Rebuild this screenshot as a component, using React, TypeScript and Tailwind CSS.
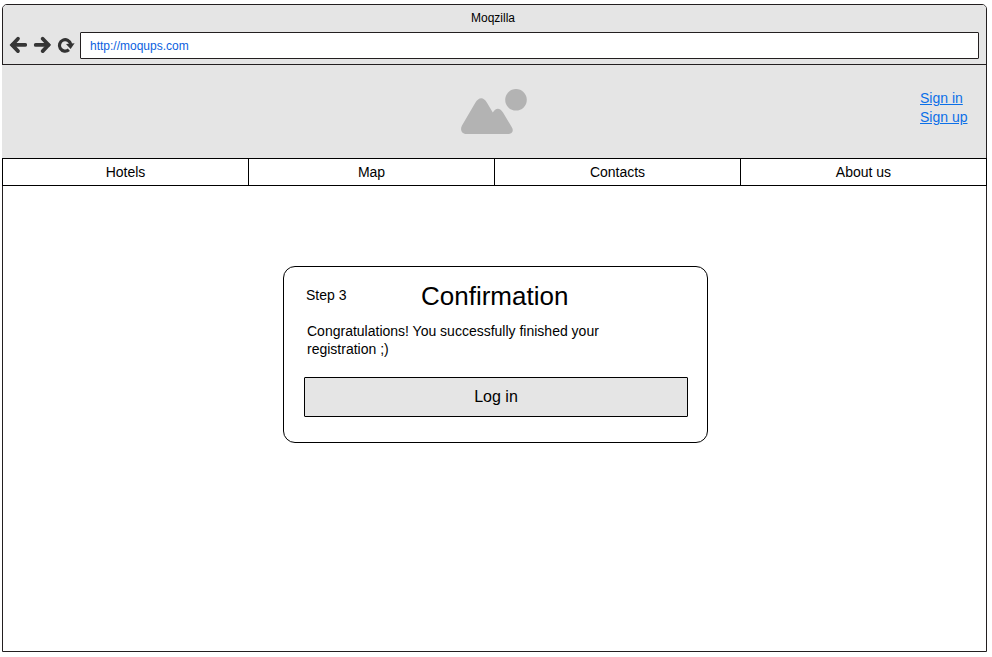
import React from "react";

const navItems = ["Hotels", "Map", "Contacts", "About us"];

function BackIcon() {
  return (
    <svg width="18" height="18" viewBox="0 0 18 18" fill="none" stroke="#363636" strokeWidth="3.7" strokeLinecap="round">
      <path d="M16.2 8.9H3.5" />
      <path d="M9 2.7L3.1 8.9l5.9 6.2" strokeLinejoin="miter" />
    </svg>
  );
}

function ForwardIcon() {
  return (
    <svg width="18" height="18" viewBox="0 0 18 18" fill="none" stroke="#363636" strokeWidth="3.7" strokeLinecap="round">
      <path d="M2.7 8.9h12.5" />
      <path d="M9.7 2.7L15.6 8.9l-5.9 6.2" strokeLinejoin="miter" />
    </svg>
  );
}

function ReloadIcon() {
  return (
    <svg width="18" height="18" viewBox="0 0 18 18">
      <path d="M11.9 13.7A5.7 5.7 0 1 1 13.7 8.2" fill="none" stroke="#333" strokeWidth="3.2" />
      <path d="M9 8L17.6 7.2L13.6 13Z" fill="#333" />
    </svg>
  );
}

function PictureLogo() {
  return (
    <svg width="66" height="46" viewBox="0 0 66 46" fill="#b3b3b3">
      <circle cx="55" cy="10.8" r="10.8" />
      <path d="M1 36.5L14.3 13.8Q17 9.2 20.2 9.2Q23.4 9.2 26 13.8L31.8 23.5Q34 19.7 36.8 19.7Q39.8 19.7 42 23.5L50.8 38.2C53.2 42.2 51 45 46.5 45H6C1 45-1.4 41 1 36.5Z" />
    </svg>
  );
}

export default function App() {
  return (
    <div className="h-[657px] w-[992px] bg-white pl-[2px] pt-[4px] font-['Liberation_Sans',Arial,sans-serif] text-sm text-black">
      <div className="flex h-[648px] w-[985px] flex-col rounded-t-[5px] border border-[#231f20] bg-white">
        <div className="h-[60px] shrink-0 rounded-t-[4px] border-b border-[#231f20] bg-[#e5e5e5]">
          <div className="h-[27px] pr-[3px] text-center text-xs leading-[26px]">Moqzilla</div>
          <div className="flex h-[27px] pl-[6px]">
            <div className="flex w-[71px] gap-[6px] pt-[4px]">
              <BackIcon />
              <ForwardIcon />
              <ReloadIcon />
            </div>
            <div className="h-[27px] w-[899px] rounded-[1px] border border-[#231f20] bg-white pl-[9px] text-xs leading-[26px] text-[#0b5fe0]">
              http://moqups.com
            </div>
          </div>
        </div>

        <header className="-ml-px grid h-[93px] w-[984px] shrink-0 grid-cols-3 bg-[#e5e5e5]">
          <div />
          <div className="flex justify-center pt-[24px]">
            <PictureLogo />
          </div>
          <div className="flex flex-col items-end pr-[18px] pt-[24px] leading-[19px] text-[#0b6fe8]">
            <div className="w-[48px] whitespace-nowrap">
              <a className="underline">Sign in</a>
            </div>
            <div className="w-[48px] whitespace-nowrap">
              <a className="underline">Sign up</a>
            </div>
          </div>
        </header>

        <nav className="-mx-px grid h-[28px] shrink-0 grid-cols-4 border-y border-l border-black bg-white">
          {navItems.map((item) => (
            <a key={item} className="border-r border-black text-center leading-[27px]">
              {item}
            </a>
          ))}
        </nav>

        <main className="pl-[280px] pt-[80px]">
          <section className="h-[177px] w-[425px] rounded-[12px] border border-black px-[20px] pt-[13px]">
            <div className="flex h-[32px]">
              <span className="w-[117px] pl-[2px] leading-[30px]">Step 3</span>
              <h1 className="text-[26px] leading-[32px]">Confirmation</h1>
            </div>
            <p className="mt-[10px] w-[320px] pl-[3px] leading-[18px]">
              Congratulations! You successfully finished your registration ;)
            </p>
            <button className="mt-[19px] block h-[40px] w-[384px] rounded-[1px] border border-black bg-[#e5e5e5] text-base">
              Log in
            </button>
          </section>
        </main>
      </div>
    </div>
  );
}
